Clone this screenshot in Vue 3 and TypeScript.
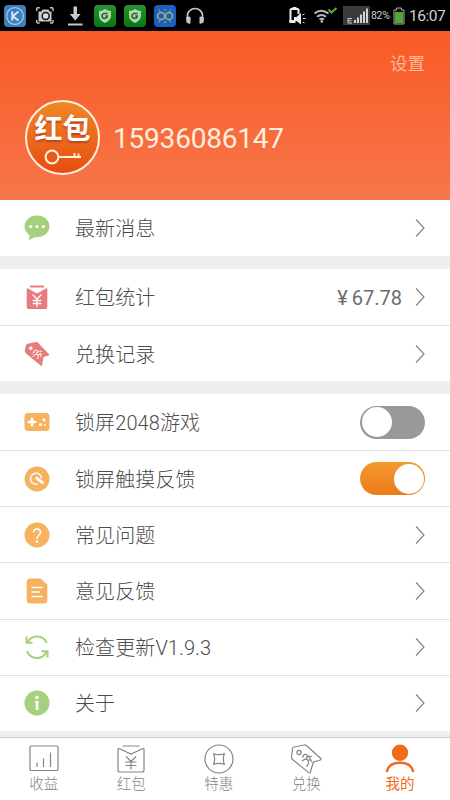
<script setup lang="ts">
import { ref } from 'vue'

type IconName = 'chat' | 'packet' | 'ticket' | 'game' | 'touch' | 'question' | 'document' | 'refresh' | 'info'
interface Row {
  icon: IconName
  label: string
  value?: string
  toggle?: boolean
}

const groups = ref<Row[][]>([
  [{ icon: 'chat', label: '最新消息' }],
  [
    { icon: 'packet', label: '红包统计', value: '67.78' },
    { icon: 'ticket', label: '兑换记录' },
  ],
  [
    { icon: 'game', label: '锁屏2048游戏', toggle: false },
    { icon: 'touch', label: '锁屏触摸反馈', toggle: true },
    { icon: 'question', label: '常见问题' },
    { icon: 'document', label: '意见反馈' },
    { icon: 'refresh', label: '检查更新V1.9.3' },
    { icon: 'info', label: '关于' },
  ],
])

const tabs = ['收益', '红包', '特惠', '兑换', '我的']
const active = ref(4)

function press(row: Row) {
  if (row.toggle !== undefined) row.toggle = !row.toggle
}
</script>

<template>
  <div class="screen">
    <div class="status">
      <svg class="status-left" viewBox="0 0 225 31" width="225" height="31">
        <defs>
          <linearGradient id="shieldBg" x1="0" y1="0" x2="0" y2="1">
            <stop offset="0" stop-color="#26942f" /><stop offset="1" stop-color="#08780f" />
          </linearGradient>
        </defs>
        <rect x="4" y="5" width="22" height="22" rx="4" fill="#3c7fc0" />
        <circle cx="15" cy="16" r="8.4" fill="none" stroke="#a5c8e8" stroke-width="1.3" />
        <path d="M12.3 11.5v9M18.5 11.5l-5.7 4.7 5.7 4.3" fill="none" stroke="#d7e6f3" stroke-width="2" />
        <g fill="none" stroke="#c8c8c8" stroke-width="1.4">
          <path d="M36.7 11V8.8q0-1 1-1h2M50 7.8h2q1 0 1 1V11M53 20v2q0 1-1 1h-2M39.700 23h-2q-1 0-1-1v-2" />
        </g>
        <path d="M38.500 11.500h3l1-2h6l1 2h2v10h-13z" fill="#c8c8c8" />
        <circle cx="45.700" cy="16" r="3.500" fill="#ddd" stroke="#111" stroke-width="1.500" />
        <path d="M73.500 6.500h3.500V14h3.600l-5.400 6.500L69.800 14h3.700zM68 23.500h14.500v2H68z" fill="#c8c8c8" />
        <g v-for="x in [94, 124]" :key="x" :transform="`translate(${x} 5)`">
          <rect width="22" height="22" rx="4" fill="url(#shieldBg)" />
          <path d="M11 4q3 2 6 2v5q0 4-6 7-6-3-6-7V6q3 0 6-2z" fill="#b5d5b1" />
          <path d="M13.700 8.500H10q-2 .5-2 2.500t2 2.500q3 0 3.300-2.500h-2" fill="none" stroke="#176e25" stroke-width="1.700" />
        </g>
        <rect x="154" y="5" width="22" height="22" rx="4" fill="#1c60bd" />
        <g fill="none" stroke="#a3b37c" stroke-width="1.500">
          <circle cx="161.200" cy="16" r="3.600" /><circle cx="169" cy="16" r="3.600" />
          <path d="M159 9.500l1 2M165 9v2M170.500 9.500l-1 2M159 22.500l1-2M165 23v-2M170.500 22.500l-1-2" stroke-width="1" />
        </g>
        <path d="M187.500 18v-2.500a7.500 7 0 0 1 15 0V18" fill="none" stroke="#c8c8c8" stroke-width="1.600" />
        <path d="M186 17.500q3-1.500 4.500-.5v6.500q-2 .5-4-1zM204 17.500q-3-1.500-4.500-.5v6.500q2 .5 4-1z" fill="#c8c8c8" />
      </svg>
      <div class="status-right">
        <svg viewBox="0 0 82 31" width="82" height="31">
          <path d="M2.500 9.500v13M10.500 9.500V14M2.500 10q0-1 1-1h6q1 0 1 1" fill="none" stroke="#eee" stroke-width="2" />
          <path d="M4.500 7h4v2h-4zM1.500 20h6v3h-6zM6 17h2.500l4.500-4v11.500L8.500 21H6z" fill="#eee" />
          <path d="M14.500 15l2-1M15 18.500h2.500M14.500 22l2 1" stroke="#ddd" stroke-width="1" />
          <g fill="none" stroke="#b9b9b9" stroke-width="2">
            <path d="M26.500 13.500q6.500-5.500 14 0" /><path d="M29 16.800q4.500-3.500 9 0" /><path d="M31.500 19.500q2.200-1.600 4.500 0" />
          </g>
          <circle cx="33.800" cy="21.500" r="1.300" fill="#ccc" />
          <path d="M40.500 9.500l3 3 5-4.500" fill="none" stroke="#58a33a" stroke-width="2.300" />
          <rect x="55" y="6" width="27" height="19" fill="#3b3b3b" />
          <path d="M64 18.500H60v4.500h4M60 20.700h3.500" fill="none" stroke="#ccc" stroke-width="1" />
          <path d="M67 20v3M70 17.500V23M73 14.500V23M76 11.500V23M79 8.500V23" stroke="#d2d2d2" stroke-width="2" />
        </svg>
        <span class="percent">82%</span>
        <svg viewBox="0 0 12 18" width="12" height="18">
          <path d="M1 3h2.500V1h5v2H11v14H1z" fill="#111" stroke="#aaa" stroke-width="1" />
          <rect x="2" y="5" width="8" height="11" fill="#54a436" />
        </svg>
        <span class="clock">16:07</span>
      </div>
    </div>

    <header class="profile">
      <div class="settings">设置</div>
      <div class="account">
        <div class="avatar">
          <span class="avatar-text">红包</span>
          <svg viewBox="0 0 38 16" width="38" height="16" fill="none" stroke="#fff2dd">
            <circle cx="8" cy="8" r="6.400" stroke-width="2" />
            <path d="M14.500 8H37M30.500 7V4M34.500 7V4.500" stroke-width="1.800" />
          </svg>
        </div>
        <span class="phone">15936086147</span>
      </div>
    </header>

    <main class="groups">
      <section v-for="(group, gi) in groups" :key="gi" class="group">
        <div v-for="row in group" :key="row.icon" class="row" @click="press(row)">
          <svg class="row-icon" viewBox="0 0 26 26" width="26" height="26">
            <g v-if="row.icon === 'chat'">
              <path d="M13 .5C6 .5 .5 5.300.5 11.500c0 3.700 2 6.700 5 8.500L5 25.300l5.600-3.100C19 23 25.500 18 25.500 11.500 25.500 5.300 20 .5 13 .5z" fill="#a5d07c" />
              <circle v-for="x in [6.700, 13, 19.300]" :key="x" :cx="x" cy="11.500" r="1.600" fill="#fff" />
            </g>
            <g v-else-if="row.icon === 'packet'">
              <path d="M6 2.500h14" stroke="#e77c7d" stroke-width="2" />
              <path d="M2.700 5.200q0-1.200 1.400-.7L13 9.500l8.900-5q1.400-.5 1.400.7v18q0 1.800-1.800 1.800h-17q-1.800 0-1.800-1.800z" fill="#e77c7d" />
              <path d="M8.500 10.500L13 15l4.500-4.500M13 15v8M8.700 16.500h8.600M8.700 19.500h8.600" fill="none" stroke="#fff" stroke-width="1.300" />
            </g>
            <g v-else-if="row.icon === 'ticket'">
              <path d="M4.500 2.500L11.500 1q1.500-.3 2.500.7L24.800 13q1 1-.2 1.500l-5 1.500-1.500 8q-.3 1.600-1.500.5L2 12.500q-1.500-1.300-1.200-3l1-5q.4-1.600 2.700-2z" fill="#e77c7d" />
              <circle cx="6.800" cy="7.200" r="1.700" fill="#fff" />
              <path d="M9 12.500q1-4 3.200-3.500t.3 3.500q3-4 5.500-2M8.500 15.500q4-3.500 5.500-1.500t-1 4M14 13.500q3-1 3 2.500M16 12l2 2" fill="none" stroke="#fff" stroke-width="1" />
            </g>
            <g v-else-if="row.icon === 'game'">
              <rect x=".5" y="4" width="25" height="18" rx="3.500" fill="#f7b25f" />
              <path d="M3.700 13h8.600M8 8.700v8.600" stroke="#fff" stroke-width="2.500" />
              <circle cx="20" cy="10.800" r="1.600" fill="#fff" /><circle cx="16.500" cy="15.500" r="1.600" fill="#fff" /><circle cx="21" cy="16" r="1" fill="#fff" />
            </g>
            <g v-else-if="row.icon === 'touch'">
              <circle cx="13" cy="13" r="12.500" fill="#f7b25f" />
              <path d="M14 17.800A5.500 5.500 0 1 1 17.500 12.500" fill="none" stroke="#fff" stroke-width="1.400" />
              <path d="M11.500 11q1-.8 2 0l6.800 5.200-2.200 2-6.500-5.300q-1-1 0-1.900z" fill="#fff" />
            </g>
            <g v-else-if="row.icon === 'question'">
              <circle cx="13" cy="13" r="12.500" fill="#f7b25f" />
              <path d="M9.500 10.500Q9.500 7 13 7t3.500 3.300q0 1.700-1.900 3.200-1.600 1.300-1.600 3.500" fill="none" stroke="#fff" stroke-width="1.500" />
              <circle cx="13" cy="19.500" r="1.200" fill="#fff" />
            </g>
            <g v-else-if="row.icon === 'document'">
              <path d="M6 .5h10.500l6.800 6V22q0 3.500-3.300 3.500H6q-3.300 0-3.300-3.500V4Q2.700.5 6 .5z" fill="#f7b25f" />
              <path d="M7.500 9.500h11M7.500 14h8.500M7.500 18.500h11" stroke="#fff" stroke-width="1.500" />
            </g>
            <g v-else-if="row.icon === 'refresh'" fill="none" stroke="#a5d07c" stroke-width="2">
              <path d="M3.500 8.500A10.500 10.500 0 0 1 22.700 8.800M3 17.200A10.500 10.500 0 0 0 22.500 17.500" />
              <path d="M2.500 2.500v6.200h6M23.500 23.500v-6.200h-6" />
            </g>
            <g v-else>
              <circle cx="13" cy="13" r="12.500" fill="#a5d07c" />
              <circle cx="13" cy="7.500" r="1.700" fill="#fff" />
              <path d="M10.700 11h3.700v9h-2.700v-7.500h-1z" fill="#fff" />
            </g>
          </svg>
          <span class="label">{{ row.label }}</span>
          <span v-if="row.value" class="value"><i class="yen">¥</i>{{ row.value }}</span>
          <span v-if="row.toggle !== undefined" class="switch" :class="{ on: row.toggle }"><i class="knob"></i></span>
          <svg v-else class="chevron" viewBox="0 0 10 20" width="10" height="20">
            <path d="M1 1.500L9 10 1 18.500" fill="none" stroke="#858585" stroke-width="1.200" />
          </svg>
        </div>
      </section>
    </main>

    <nav class="tabs">
      <div v-for="(tab, i) in tabs" :key="tab" class="tab" :class="{ active: active === i }" @click="active = i">
        <svg viewBox="0 0 32 30" width="32" height="30" fill="none" stroke="currentColor" stroke-width="1.200">
          <g v-if="i === 0">
            <rect x="2" y="2" width="28" height="24.500" rx="1" />
            <path d="M9 18.500V23M15.500 14.500V23M22.500 8.500V23" />
          </g>
          <g v-else-if="i === 1">
            <path d="M7.500 2h17M3 5.500q0-1.500 1.500-.8L16 10l11.500-5.300q1.500-.7 1.500.8V26q0 2-2 2H5q-2 0-2-2z" />
            <path d="M11 12.500l5 5 5-5M16 17.500v8M10.500 18h11M10.500 21.500h11" />
          </g>
          <g v-else-if="i === 2">
            <circle cx="16" cy="15" r="14" />
            <path d="M10.700 9.700q5.300 1.800 10.600 0-1.800 5.300 0 10.600-5.300-1.800-10.600 0 1.800-5.300 0-10.600z" />
          </g>
          <g v-else-if="i === 3">
            <path d="M4 3l10.500-2q1.300-.2 2.300.7L30.800 14.500q1 1-.4 1.500l-7 2-3 10q-.5 1.500-1.900.4L2.500 15.500q-1.200-1-1-2.400L2.500 4.500Q2.700 3.200 4 3z" />
            <circle cx="9" cy="8.500" r="2.200" />
            <path d="M12.500 13.500q1-3.500 3.500-3t.2 4q2.500-4 5.500-1.500M12 17q4.500-3.500 6-.5t-1.500 6M18.500 16q3-.5 3.500 2.500M19 13l2 3" />
          </g>
          <g v-else>
            <circle cx="16" cy="8.800" r="8.200" fill="currentColor" stroke="none" />
            <path d="M2.800 28Q4.500 18.700 16 18.700T29.200 28" stroke-width="2.500" />
          </g>
        </svg>
        <span class="tab-label">{{ tab }}</span>
      </div>
    </nav>
  </div>
</template>

<style>
body {
  margin: 0;
  background: #fff;
}
</style>

<style scoped>
.screen {
  width: 450px;
  height: 800px;
  display: flex;
  flex-direction: column;
  overflow: hidden;
  background: #efefef;
  color: #4c4c4c;
  font-family: Roboto, "Noto Sans CJK SC", sans-serif;
  font-weight: 300;
}
.status {
  height: 31px;
  flex: none;
  display: flex;
  justify-content: space-between;
  background: #000;
}
.status-right {
  display: flex;
  align-items: center;
  padding-right: 5px;
  color: #d0d0d0;
  font-weight: 400;
}
.percent {
  width: 20px;
  margin: 0 2px 0 1px;
  font-size: 10.5px;
  letter-spacing: -0.3px;
}
.clock {
  width: 36px;
  margin-left: 4px;
  font-size: 15.500px;
  letter-spacing: -0.5px;
  white-space: nowrap;
}
.profile {
  box-sizing: border-box;
  height: 169px;
  flex: none;
  display: flex;
  flex-direction: column;
  padding: 20px 25px 0;
  background: linear-gradient(#f95a25, #f7764b);
}
.settings {
  height: 26px;
  line-height: 26px;
  font-size: 17.500px;
  font-weight: 400;
  text-align: right;
  color: #ffb899;
}
.account {
  display: flex;
  align-items: center;
  gap: 13px;
  padding-top: 23px;
}
.avatar {
  box-sizing: border-box;
  width: 75px;
  height: 75px;
  display: flex;
  flex-direction: column;
  align-items: center;
  padding-top: 9px;
  border: 2px solid #fff0df;
  border-radius: 50%;
  background: linear-gradient(#ef8726, #e84d12);
}
.avatar-text {
  height: 38px;
  line-height: 38px;
  font-size: 28px;
  font-weight: 700;
  color: #fff;
  text-shadow: 0 2px 2px #b5471b;
}
.phone {
  padding-top: 2px;
  font-size: 28px;
  font-weight: 400;
  letter-spacing: -0.200px;
  color: #ffeedd;
}
.groups {
  flex: none;
  display: flex;
  flex-direction: column;
  gap: 12.800px;
}
.group {
  background: #fff;
}
.row {
  box-sizing: border-box;
  height: 56.150px;
  display: flex;
  align-items: center;
  padding: 0 25px 0 24px;
}
.row + .row {
  border-top: 1px solid #e2e2e2;
}
.row-icon {
  flex: none;
  margin-right: 25px;
}
.label {
  flex: 1;
  padding-top: 2px;
  font-size: 20px;
  line-height: 28px;
  letter-spacing: 0.1px;
  white-space: nowrap;
}
.value {
  display: flex;
  align-items: center;
  margin-right: 13px;
  padding-top: 1px;
  font-size: 20px;
  font-weight: 400;
  color: #6c6c6c;
}
.yen {
  margin-right: 4px;
  font-family: Roboto, sans-serif;
  font-style: normal;
  line-height: 24px;
}
.switch {
  box-sizing: border-box;
  width: 65px;
  height: 33px;
  display: flex;
  padding: 1.500px;
  border-radius: 17px;
  background: #999;
}
.switch.on {
  justify-content: flex-end;
  background: linear-gradient(#f39a30, #ee7a1c);
}
.knob {
  width: 30px;
  height: 30px;
  border-radius: 50%;
  background: #fff;
}
.tabs {
  box-sizing: border-box;
  height: 63px;
  flex: none;
  display: grid;
  grid-template-columns: repeat(4, 87.500px) 100px;
  margin-top: auto;
  padding-top: 6px;
  border-top: 1px solid #c9c9c9;
  background: #fff;
}
.tab {
  display: flex;
  flex-direction: column;
  align-items: center;
  color: #858585;
}
.tab-label {
  height: 20px;
  padding-top: 1px;
  line-height: 20px;
  font-size: 14.500px;
}
.tab.active {
  color: #f26a1b;
}
.tab.active .tab-label {
  font-weight: 400;
}
</style>
